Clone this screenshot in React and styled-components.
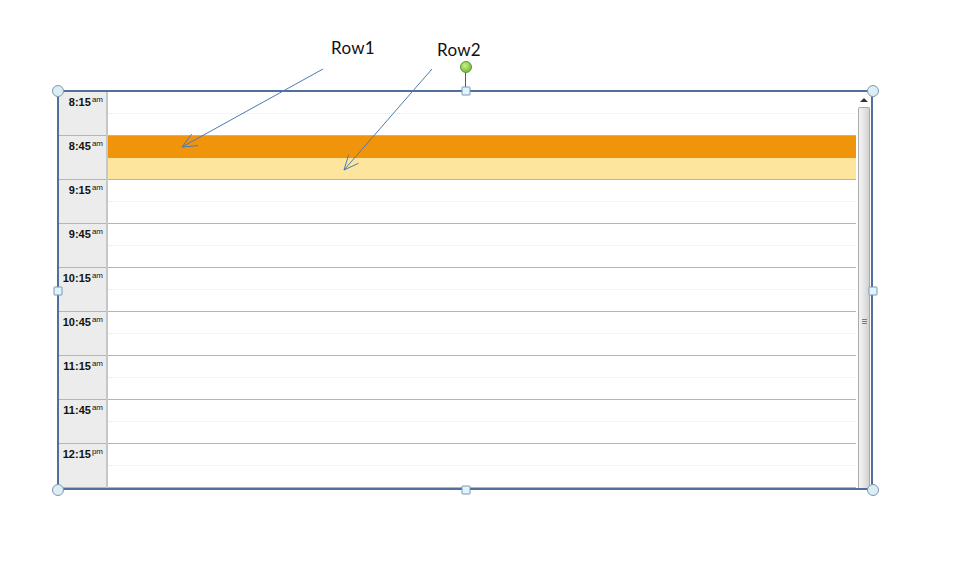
import React from 'react'
import styled, { createGlobalStyle } from 'styled-components'

const GlobalStyle = createGlobalStyle`
  html, body {
    margin: 0;
    padding: 0;
    background: #fff;
  }
  body {
    font-family: "Liberation Sans", Arial, sans-serif;
  }
`

const Page = styled.div`
  position: relative;
  width: 955px;
  height: 587px;
  padding: 90px 0 0 57px;
  box-sizing: border-box;
  overflow: hidden;
`

const Callout = styled.div`
  position: absolute;
  left: ${p => p.$x}px;
  top: ${p => p.$y}px;
  font-family: Lato, "Open Sans", sans-serif;
  font-size: 17px;
  color: #111;
  letter-spacing: 0.3px;
`

const Arrows = styled.svg`
  position: absolute;
  left: 0;
  top: 0;
  pointer-events: none;
  z-index: 5;
`

const Frame = styled.div`
  position: relative;
  width: 816px;
  border: 2px solid #50709a;
  box-sizing: border-box;
  display: flex;
  background: #fff;
`

const TimeColumn = styled.div`
  width: 47px;
  background: #ececec;
  border-right: 2px solid #c6c6c6;
  display: flex;
  flex-direction: column;
`

const TimeCell = styled.div`
  height: 42px;
  border-bottom: 1px solid #b4b4b4;
  text-align: right;
  padding: 1px 3px 0 0;
  font-size: 11px;
  font-weight: bold;
  color: #111;
  line-height: 13px;
  white-space: nowrap;
`

const Meridiem = styled.span`
  font-size: 8px;
  font-weight: normal;
  vertical-align: 4px;
  margin-left: 1px;
`

const Slots = styled.div`
  width: 748px;
  display: flex;
  flex-direction: column;
`

const Slot = styled.div`
  display: flex;
  flex-direction: column;
  border-bottom: 1px solid #b4b4b4;
`

const Half = styled.div`
  height: 21px;
  background: ${p => p.$fill || '#fff'};
  border-bottom: ${p => (p.$first ? '1px dotted #e8e8e8' : 'none')};
  ${p => p.$first && p.$fill && `border-bottom: 1px solid ${p.$fill};`}
`

const ScrollBar = styled.div`
  width: 15px;
  background: #fff;
  display: flex;
  flex-direction: column;
  align-items: center;
`

const UpButton = styled.div`
  height: 15px;
  width: 100%;
  display: flex;
  align-items: center;
  justify-content: center;
  &::before {
    content: '';
    border-left: 4px solid transparent;
    border-right: 4px solid transparent;
    border-bottom: 4px solid #333;
    margin-top: 1px;
  }
`

const Thumb = styled.div`
  flex: 1;
  width: 12px;
  margin-left: 1px;
  border: 1px solid #a9a9a9;
  border-bottom: none;
  border-radius: 2px 2px 0 0;
  box-sizing: border-box;
  background: linear-gradient(to right, #f4f4f4 0%, #e6e6e6 45%, #d2d2d2 100%);
  display: flex;
  align-items: center;
  justify-content: center;
`

const Grip = styled.div`
  width: 5px;
  height: 5px;
  margin-top: 46px;
  background: repeating-linear-gradient(to bottom, #7a7a7a 0 1px, transparent 1px 2px);
`

const Handle = styled.div`
  position: absolute;
  z-index: 6;
  box-sizing: border-box;
  left: ${p => p.$x}px;
  top: ${p => p.$y}px;
  transform: translate(-50%, -50%);
  width: ${p => (p.$round ? 12 : 9)}px;
  height: ${p => (p.$round ? 12 : 9)}px;
  border-radius: ${p => (p.$round ? '50%' : '1px')};
  border: 1px solid #7d98b3;
  background: ${p => (p.$round ? '#dcedf4' : '#dff4fc')};
`

const RotateKnob = styled.div`
  position: absolute;
  z-index: 6;
  left: 401px;
  top: -31px;
  width: 10px;
  height: 10px;
  border-radius: 50%;
  border: 1px solid #5f8f3a;
  background: radial-gradient(circle at 40% 35%, #c8f08a, #7fc23e 70%);
`

const RotateStem = styled.div`
  position: absolute;
  z-index: 5;
  left: 406px;
  top: -20px;
  width: 1px;
  height: 19px;
  background: #44607e;
`

const times = [
  ['8:15', 'am'], ['8:45', 'am'], ['9:15', 'am'], ['9:45', 'am'],
  ['10:15', 'am'], ['10:45', 'am'], ['11:15', 'am'], ['11:45', 'am'],
  ['12:15', 'pm']
]

// the booked half hours at 8:45
const fills = { 1: ['#f0950b', '#fee59d'] }

function Arrow ({ x1, y1, x2, y2 }) {
  const ang = Math.atan2(y2 - y1, x2 - x1)
  const len = 16
  const spread = 0.42
  const a = [x2 - len * Math.cos(ang - spread), y2 - len * Math.sin(ang - spread)]
  const b = [x2 - len * Math.cos(ang + spread), y2 - len * Math.sin(ang + spread)]
  return (
    <g stroke="#4d7ab4" strokeWidth="1" fill="none">
      <line x1={x1} y1={y1} x2={x2} y2={y2} />
      <polyline points={`${a[0]},${a[1]} ${x2},${y2} ${b[0]},${b[1]}`} />
    </g>
  )
}

export default function App () {
  const handles = [
    [0, 0, true], [408, 0, false], [815, 0, true],
    [0, 200, false], [815, 200, false],
    [0, 399, true], [408, 399, false], [815, 399, true]
  ]
  return (
    <Page>
      <GlobalStyle />
      <Callout $x={331} $y={37}>Row1</Callout>
      <Callout $x={437} $y={39}>Row2</Callout>
      <Arrows width="955" height="587">
        <Arrow x1={323} y1={69} x2={182} y2={147} />
        <Arrow x1={432} y1={69} x2={344} y2={170} />
      </Arrows>
      <Frame>
        <TimeColumn>
          {times.map(([t, m]) => (
            <TimeCell key={t}>
              {t}<Meridiem>{m}</Meridiem>
            </TimeCell>
          ))}
        </TimeColumn>
        <Slots>
          {times.map(([t], i) => (
            <Slot key={t}>
              <Half $first $fill={fills[i] && fills[i][0]} />
              <Half $fill={fills[i] && fills[i][1]} />
            </Slot>
          ))}
        </Slots>
        <ScrollBar>
          <UpButton />
          <Thumb>
            <Grip />
          </Thumb>
        </ScrollBar>
        <RotateStem />
        <RotateKnob />
        {handles.map(([x, y, round], i) => (
          <Handle key={i} $x={x - 1} $y={y - 1} $round={round} />
        ))}
      </Frame>
    </Page>
  )
}
